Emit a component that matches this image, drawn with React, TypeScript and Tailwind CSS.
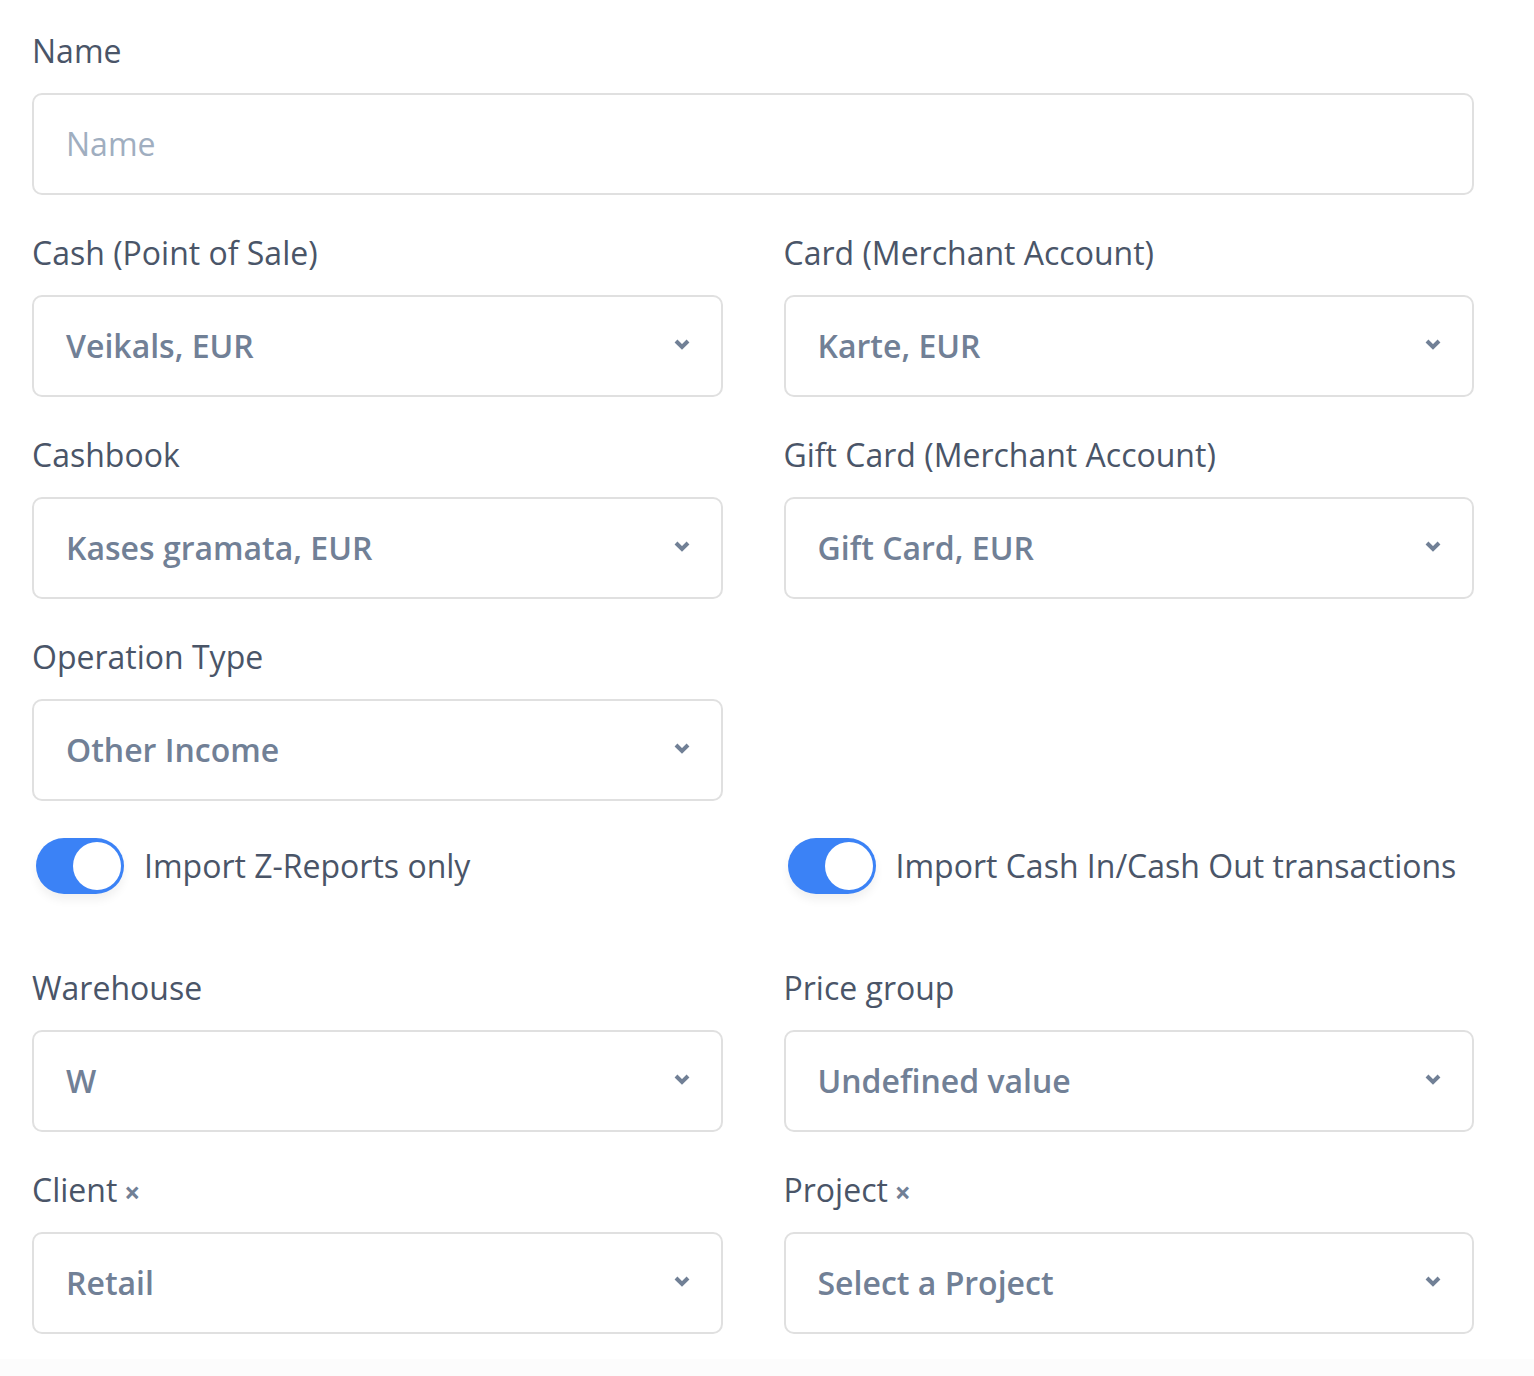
import React from "react";

const font = { fontFamily: '"Open Sans", "Noto Sans", sans-serif' };

function Chevron() {
  return (
    <svg viewBox="0 0 18 14" className="w-[18px] h-[14px] shrink-0 mt-[-3px]">
      <polyline
        points="3,3 9,9 15,3"
        fill="none"
        stroke="#718096"
        strokeWidth="4"
        strokeLinecap="butt"
        strokeLinejoin="miter"
      />
    </svg>
  );
}

function Label({ text, clearable }: { text: string; clearable?: boolean }) {
  return (
    <div className="h-[48px] leading-[48px] text-[32px] text-[#4a5568] flex items-center">
      <span>{text}</span>
      {clearable && (
        <span className="ml-[7px] text-[28px] font-bold text-[#718096] leading-none mt-[4px]">×</span>
      )}
    </div>
  );
}

function SelectBox({ value }: { value: string }) {
  return (
    <div className="mt-[18px] h-[102px] rounded-[10px] border-2 border-[#e0e0e0] bg-white flex items-center justify-between pl-[32px] pr-[30px]">
      <span className="text-[32px] font-semibold text-[#718096]">{value}</span>
      <Chevron />
    </div>
  );
}

function Field({ label, value, clearable }: { label: string; value: string; clearable?: boolean }) {
  return (
    <div>
      <Label text={label} clearable={clearable} />
      <SelectBox value={value} />
    </div>
  );
}

function Toggle({ label }: { label: string }) {
  return (
    <div className="flex items-center gap-[20px] pl-[4px]">
      <div className="w-[88px] h-[56px] shrink-0 rounded-full bg-[#3b82f6] flex items-center justify-end pr-[3px] shadow-[0_6px_10px_rgba(0,0,0,0.06)]">
        <div className="w-[48px] h-[48px] rounded-full bg-white" />
      </div>
      <span className="text-[32px] text-[#4a5568] whitespace-nowrap">{label}</span>
    </div>
  );
}

export default function App() {
  return (
    <div className="bg-white min-h-[1376px] flex flex-col" style={font}>
      <div className="pl-[32px] pr-[60px] pt-[27px]">
        <div>
          <Label text="Name" />
          <div className="mt-[18px] h-[102px] rounded-[10px] border-2 border-[#e0e0e0] bg-white flex items-center pl-[32px]">
            <span className="text-[32px] text-[#a0aec0]">Name</span>
          </div>
        </div>

        <div className="grid grid-cols-2 gap-x-[61px] gap-y-[34px] mt-[34px]">
          <Field label="Cash (Point of Sale)" value="Veikals, EUR" />
          <Field label="Card (Merchant Account)" value="Karte, EUR" />
          <Field label="Cashbook" value="Kases gramata, EUR" />
          <Field label="Gift Card (Merchant Account)" value="Gift Card, EUR" />
          <Field label="Operation Type" value="Other Income" />
          <div />
        </div>

        <div className="grid grid-cols-2 gap-x-[61px] mt-[37px]">
          <Toggle label="Import Z-Reports only" />
          <Toggle label="Import Cash In/Cash Out transactions" />
        </div>

        <div className="grid grid-cols-2 gap-x-[61px] gap-y-[34px] mt-[70px]">
          <Field label="Warehouse" value="W" />
          <Field label="Price group" value="Undefined value" />
          <Field label="Client" value="Retail" clearable />
          <Field label="Project" value="Select a Project" clearable />
        </div>
      </div>
      <div className="mt-[25px] flex-1 bg-[#fcfcfc]" />
    </div>
  );
}
